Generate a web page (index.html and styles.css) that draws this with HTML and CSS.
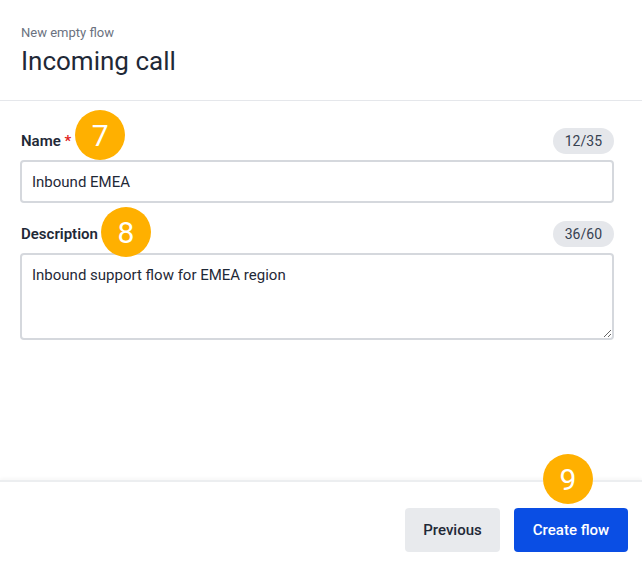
FILE: index.html
```html
<!DOCTYPE html>
<html>
<head>
<meta charset="utf-8">
<link rel="stylesheet" href="styles.css">
</head>
<body>
<div class="page">
  <header class="head">
    <div class="eyebrow">New empty flow</div>
    <h1 class="title">Incoming call</h1>
  </header>
  <main class="form">
    <div class="field">
      <div class="label-row">
        <label class="label">Name <span class="req">*</span><span class="badge badge-name">7</span></label>
        <span class="count">12/35</span>
      </div>
      <input class="input" type="text" value="Inbound EMEA">
    </div>
    <div class="field field-desc">
      <div class="label-row">
        <label class="label">Description<span class="badge badge-desc">8</span></label>
        <span class="count">36/60</span>
      </div>
      <textarea class="textarea">Inbound support flow for EMEA region</textarea>
    </div>
  </main>
  <footer class="foot">
    <button class="btn btn-secondary">Previous</button>
    <button class="btn btn-primary">Create flow<span class="badge badge-create">9</span></button>
  </footer>
</div>
</body>
</html>
```
FILE: styles.css
```css
* { box-sizing: border-box; }
html, body { margin: 0; padding: 0; background: #fff; }
body {
  font-family: Roboto, "Noto Sans", "Liberation Sans", sans-serif;
  color: #1f2937;
}
.page {
  width: 642px;
  height: 575px;
  display: flex;
  flex-direction: column;
}
.head {
  height: 101px;
  padding: 25px 20px 0 21px;
  border-bottom: 1px solid #e5e7eb;
}
.eyebrow {
  font-size: 13px;
  line-height: 16px;
  color: #6b7280;
}
.title {
  margin: 4px 0 0;
  font-size: 26px;
  line-height: 32px;
  font-weight: 400;
  color: #1f2937;
}
.form {
  flex: 1;
  padding: 27px 28px 0 20px;
}
.field-desc { margin-top: 18px; }
.label-row {
  display: flex;
  justify-content: space-between;
  align-items: center;
  height: 26px;
  margin-bottom: 6px;
}
.label {
  position: relative;
  font-size: 15px;
  font-weight: 600;
  color: #1f2937;
  padding-left: 1px;
}
.req { color: #e11d1d; }
.count {
  height: 26px;
  padding: 0 12px;
  border-radius: 13px;
  background: #e5e7eb;
  font-size: 14px;
  line-height: 26px;
  color: #374151;
}
.input, .textarea {
  display: block;
  width: 100%;
  border: 2px solid #d5d8dd;
  border-radius: 4px;
  font-family: inherit;
  font-size: 15px;
  color: #1f2937;
  background: #fff;
  padding: 0 10px;
  outline: none;
}
.input { height: 43px; }
.textarea {
  height: 87px;
  padding-top: 10px;
  line-height: 20px;
  resize: vertical;
}
.badge {
  position: absolute;
  width: 50px;
  height: 50px;
  border-radius: 50%;
  background: #ffb000;
  color: #fff;
  font-family: Roboto, "Noto Sans", "Liberation Sans", sans-serif;
  font-size: 30px;
  font-weight: 400;
  line-height: 52px;
  text-align: center;
}
.badge-name { left: calc(100% + 4px); top: -22px; }
.badge-desc { left: calc(100% + 3px); top: -18px; }
.foot {
  height: 95px;
  border-top: 2px solid #eceef0;
  box-shadow: 0 -2px 3px rgba(0, 0, 0, 0.03);
  display: flex;
  justify-content: flex-end;
  align-items: flex-start;
  gap: 14px;
  padding: 26px 14px 0 0;
}
.btn {
  position: relative;
  height: 44px;
  border: none;
  border-radius: 4px;
  font-family: inherit;
  font-size: 15px;
  font-weight: 500;
  padding: 0 18px;
}
.btn-secondary {
  width: 95px;
  background: #e8eaed;
  color: #1f2937;
}
.btn-primary {
  width: 114px;
  background: #0a4ee4;
  color: #fff;
}
.badge-create { left: 29px; top: -54px; }
```
